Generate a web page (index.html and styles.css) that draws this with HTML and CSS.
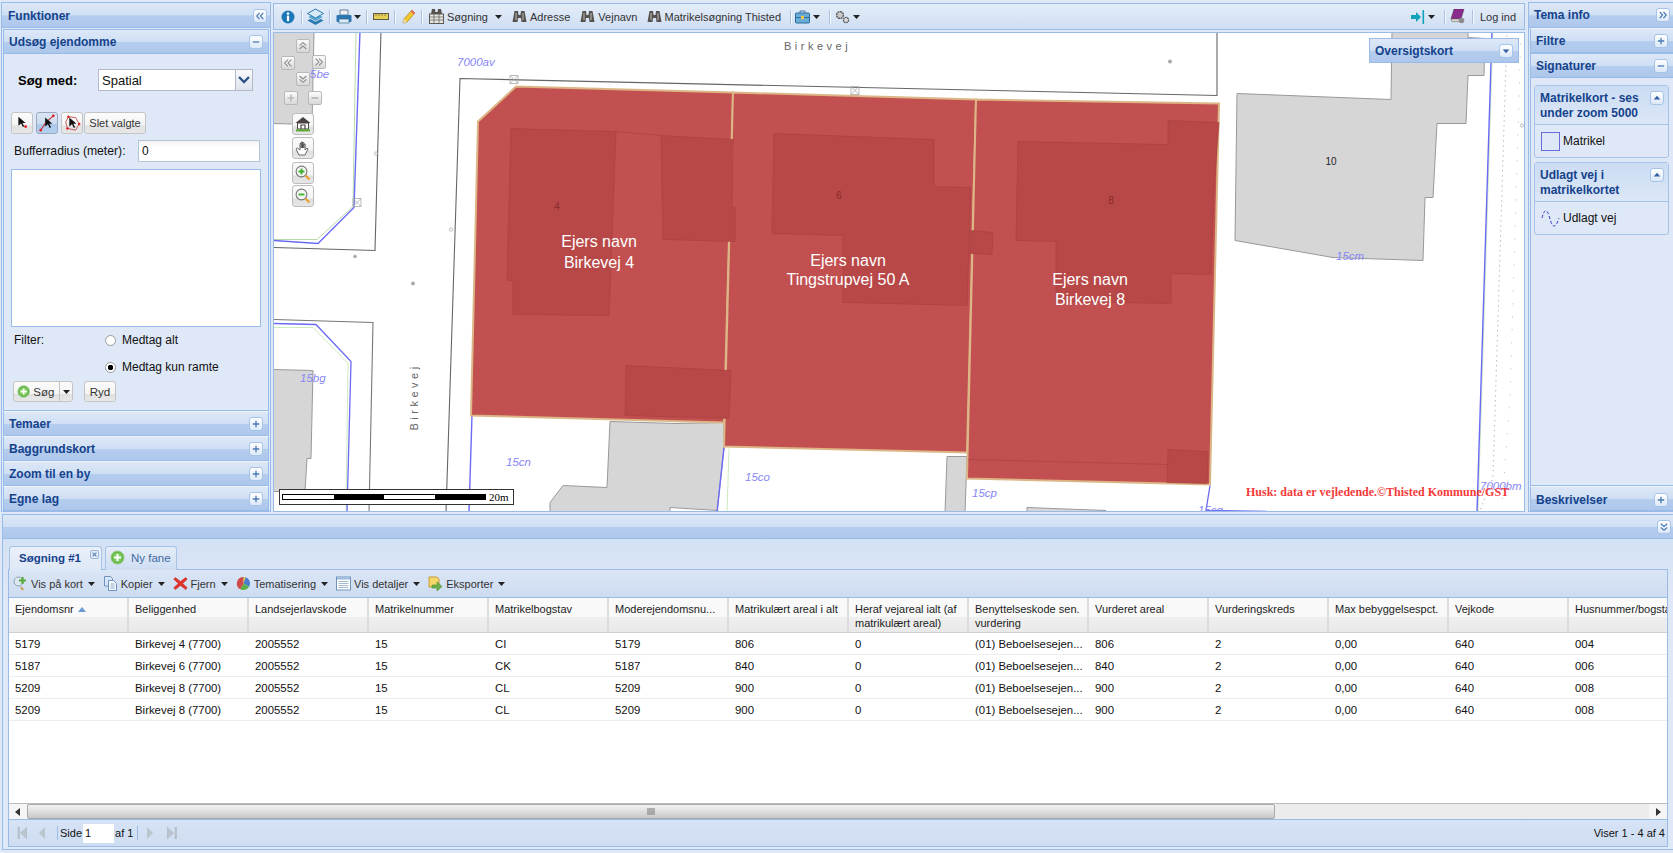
FILE: index.html
```html
<!DOCTYPE html>
<html lang="da">
<head>
<meta charset="utf-8">
<title>Kort</title>
<link rel="stylesheet" href="styles.css">
</head>
<body>
<svg class="defs" aria-hidden="true">
  <symbol id="i-plus" viewBox="0 0 13 13"><path d="M6.5 3v7M3 6.5h7" stroke="#4a7ab5" stroke-width="1.4" fill="none"/></symbol>
  <symbol id="i-minus" viewBox="0 0 13 13"><path d="M3 6.5h7" stroke="#4a7ab5" stroke-width="1.4" fill="none"/></symbol>
  <symbol id="i-dleft" viewBox="0 0 13 13"><path d="M6 3L3 6.5 6 10M10 3L7 6.5 10 10" stroke="#4a7ab5" stroke-width="1.3" fill="none"/></symbol>
  <symbol id="i-dright" viewBox="0 0 13 13"><path d="M3 3l3 3.5L3 10M7 3l3 3.5L7 10" stroke="#4a7ab5" stroke-width="1.3" fill="none"/></symbol>
  <symbol id="i-ddown" viewBox="0 0 13 13"><path d="M3 3l3.5 3L10 3M3 7l3.5 3L10 7" stroke="#4a7ab5" stroke-width="1.3" fill="none"/></symbol>
  <symbol id="i-tdown" viewBox="0 0 13 13"><path d="M3 5h7L6.5 9z" fill="#2f5f9f"/></symbol>
  <symbol id="i-tup" viewBox="0 0 13 13"><path d="M3 8h7L6.5 4z" fill="#2f5f9f"/></symbol>
  <symbol id="i-binoc" viewBox="0 0 15 15"><path d="M2.5 2h3.5l.5 4h2l.5-4h3.5l2 11H9.5L9 9H6l-.5 4H.5z" fill="#55524f"/><path d="M3 4h2v7H3zM10 4h2v7h-2z" fill="#8c8985"/></symbol>
  <symbol id="i-plusgreen" viewBox="0 0 15 15"><circle cx="7.5" cy="7.5" r="6.6" fill="#67b94a" stroke="#9fcf8d"/><circle cx="7.5" cy="7.5" r="4.6" fill="#7fca60"/><path d="M7.5 4v7M4 7.5h7" stroke="#fff" stroke-width="2"/></symbol>
  <symbol id="i-caret" viewBox="0 0 7 4"><path d="M0 0h7L3.5 4z" fill="#222"/></symbol>
</svg>

<div class="top">
  <aside class="left">
    <div class="hd hd-main"><span>Funktioner</span><b class="tool"><svg><use href="#i-dleft"/></svg></b></div>
    <section class="acc acc-open">
      <div class="hd"><span>Udsøg ejendomme</span><b class="tool"><svg><use href="#i-minus"/></svg></b></div>
      <div class="search">
        <div class="row-with">
          <label class="with-label">Søg med:</label>
          <div class="select"><span>Spatial</span><i class="trigger"><svg viewBox="0 0 16 20"><path d="M3 7l5 5 5-5" stroke="#2f5487" stroke-width="2.4" fill="none"/></svg></i></div>
        </div>
        <div class="row-tools">
          <button class="btn btn-icon"><svg viewBox="0 0 20 20"><path d="M6 3v10l3-2.5 2 4 1.5-.8-2-3.8h3.5z" fill="#111"/><circle cx="14" cy="14" r="1.6" fill="#e02020"/></svg></button>
          <button class="btn btn-icon btn-on"><svg viewBox="0 0 20 20"><path d="M3 18L9 9l8-7" stroke="#c03030" stroke-width="1.2" fill="none"/><path d="M8 4v10l3-2.5 2 4 1.5-.8-2-3.8h3.5z" fill="#111"/><circle cx="3" cy="18" r="1.5" fill="#e02020"/><circle cx="17" cy="2" r="1.5" fill="#e02020"/></svg></button>
          <button class="btn btn-icon"><svg viewBox="0 0 20 20"><path d="M6 3l8 1 4 7-4 7-9-2-2-7z" fill="none" stroke="#c05050"/><path d="M7 4v10l3-2.5 2 4 1.5-.8-2-3.8h3.5z" fill="#111"/><circle cx="6" cy="3" r="1.4" fill="#e02020"/><circle cx="18" cy="11" r="1.4" fill="#e02020"/><circle cx="5" cy="16" r="1.4" fill="#e02020"/></svg></button>
          <button class="btn btn-text">Slet valgte</button>
        </div>
        <div class="row-buffer">
          <label>Bufferradius (meter):</label>
          <div class="input">0</div>
        </div>
        <div class="listbox"></div>
        <div class="filter">
          <span class="filter-label">Filter:</span>
          <div class="radios">
            <div class="radio"><i class="dot"></i><span>Medtag alt</span></div>
            <div class="radio"><i class="dot dot-on"></i><span>Medtag kun ramte</span></div>
          </div>
        </div>
        <div class="row-actions">
          <button class="btn btn-search"><svg><use href="#i-plusgreen"/></svg><span>Søg</span><i class="split"><svg><use href="#i-caret"/></svg></i></button>
          <button class="btn btn-clear">Ryd</button>
        </div>
      </div>
    </section>
    <section class="acc"><div class="hd"><span>Temaer</span><b class="tool"><svg><use href="#i-plus"/></svg></b></div></section>
    <section class="acc"><div class="hd"><span>Baggrundskort</span><b class="tool"><svg><use href="#i-plus"/></svg></b></div></section>
    <section class="acc"><div class="hd"><span>Zoom til en by</span><b class="tool"><svg><use href="#i-plus"/></svg></b></div></section>
    <section class="acc"><div class="hd"><span>Egne lag</span><b class="tool"><svg><use href="#i-plus"/></svg></b></div></section>
  </aside>

  <main class="center">
    <div class="mapbar">
      <svg class="ti ti-info" viewBox="0 0 14 14"><circle cx="7" cy="7" r="6.5" fill="#1c79b7"/><circle cx="7" cy="3.6" r="1.3" fill="#fff"/><rect x="5.9" y="5.6" width="2.2" height="5.6" fill="#fff"/></svg>
      <i class="sep"></i>
      <svg class="ti ti-layers" viewBox="0 0 17 17"><path d="M8.5 8l8 4.5-8 4.5-8-4.5z" fill="#2b78b0"/><path d="M8.5 4.5l8 4.5-8 4.5-8-4.5z" fill="#5aa4d0" stroke="#fff" stroke-width=".6"/><path d="M8.5 1l8 4.5-8 4.5-8-4.5z" fill="#d8eaf6" stroke="#2b78b0"/></svg>
      <i class="sep"></i>
      <svg class="ti ti-print" viewBox="0 0 16 15"><path d="M4 1h8v5H4z" fill="#eef3f8" stroke="#67809a"/><rect x="0.5" y="6" width="15" height="7" rx="1" fill="#2b78b0"/><rect x="3" y="10" width="10" height="4" fill="#dce8f2" stroke="#1f5c88" stroke-width=".6"/></svg>
      <svg class="caret"><use href="#i-caret"/></svg>
      <i class="sep"></i>
      <svg class="ti ti-ruler" viewBox="0 0 16 8"><rect x=".5" y=".5" width="15" height="6" fill="#e6cf55" stroke="#5c5a45"/><path d="M3 1v2M6 1v2M9 1v2M12 1v2" stroke="#5c5a45" stroke-width=".7"/></svg>
      <i class="sep"></i>
      <svg class="ti ti-pencil" viewBox="0 0 14 15"><path d="M1 14l1-4 8-9 3 3-8 9z" fill="#f3c92c" stroke="#a08020" stroke-width=".7"/><path d="M1 14l1-4 3 3z" fill="#f4dfb4"/><path d="M10 1l3 3-1.5 1.5-3-3z" fill="#e66d6d"/></svg>
      <i class="sep"></i>
      <svg class="ti ti-table" viewBox="0 0 15 15"><path d="M3 0h3l.4 3h2.2L9 0h3l1 5H2z" fill="#55524f"/><rect x=".5" y="5" width="14" height="9.5" fill="#e8e6e2" stroke="#5c5a55"/><path d="M.5 8h14M.5 11h14M5 5v9M10 5v9" stroke="#5c5a55" stroke-width=".7"/></svg>
      <span class="bt bt-sog">Søgning</span>
      <svg class="caret caret-sog"><use href="#i-caret"/></svg>
      <svg class="ti ti-b1"><use href="#i-binoc"/></svg><span class="bt">Adresse</span>
      <svg class="ti ti-b2"><use href="#i-binoc"/></svg><span class="bt">Vejnavn</span>
      <svg class="ti ti-b3"><use href="#i-binoc"/></svg><span class="bt">Matrikelsøgning Thisted</span>
      <i class="sep sep-a"></i>
      <svg class="ti ti-bag" viewBox="0 0 15 14"><path d="M5 3V1h5v2" fill="none" stroke="#3d7aa8"/><rect x=".5" y="3" width="14" height="10" rx="1" fill="#6aaed8" stroke="#2b6a9a"/><path d="M.5 7.5h14" stroke="#2b6a9a"/><rect x="6" y="6" width="3" height="3" fill="#f2c94c"/></svg>
      <svg class="caret caret-n"><use href="#i-caret"/></svg>
      <i class="sep sep-b"></i>
      <svg class="ti ti-gears" viewBox="0 0 15 14"><circle cx="5" cy="5" r="3.4" fill="#c9c9c9" stroke="#555" stroke-width="1.4" stroke-dasharray="2 .6"/><circle cx="11" cy="10" r="2.6" fill="#dedede" stroke="#555" stroke-width="1.3" stroke-dasharray="1.6 .6"/></svg>
      <svg class="caret caret-n"><use href="#i-caret"/></svg>
      <span class="grow"></span>
      <svg class="ti ti-arrow" viewBox="0 0 14 14"><path d="M0 5h5V2l5 5-5 5V9H0z" fill="#12a3bb"/><rect x="11.5" y="0" width="1.6" height="14" fill="#12a3bb"/></svg>
      <svg class="caret caret-n"><use href="#i-caret"/></svg>
      <i class="sep sep-c"></i>
      <svg class="ti ti-book" viewBox="0 0 15 15"><path d="M4 0h10L11 10H1z" fill="#8a2a8c" stroke="#5c3a5c" stroke-width=".6"/><path d="M1 10h10l.6 2.6H2z" fill="#e4e0d8" stroke="#666" stroke-width=".6"/><circle cx="11.5" cy="11.5" r="2.8" fill="#8d8d8d"/></svg>
      <i class="sep sep-d"></i>
      <span class="bt bt-log">Log ind</span>
    </div>

    <div class="map">
      <svg class="mapsvg" viewBox="274 33 1250 477">
        <!-- grey buildings -->
        <g fill="#d6d6d6" stroke="#999" stroke-width="1">
          <path d="M273 32L314 32 312 124 273 123Z"/>
          <path d="M273 369L313 370 311 458 307 458 305 491 273 491Z"/>
          <path d="M1392 30L1468 30 1468 37 1485 38 1484 75 1468 75 1466 123 1437 123 1433 197 1425 197 1423 260 1333 257 1235 240 1237 93 1391 99Z"/>
          <path d="M610 421L675 423 724 422 724 447 717 512 550 512 550 502 563 485 607 487Z"/>
          <path d="M947 456L967 456 965 512 945 512Z"/>
          <path d="M1027 507L1106 510 1106 514 1027 514Z"/>
          <path d="M670 507L718 510 718 514 670 514Z" fill="#fff"/>
        </g>
        <!-- parcel lines -->
        <g fill="none">
          <path d="M356 30L353 206 317 239 274 239" stroke="#b8dca8"/>
          <path d="M360 30L354 207 318 243 273 240" stroke="#6a6af5" stroke-width="1.4"/>
          <path d="M381 30L375 250 273 247" stroke="#666" stroke-width="1.1"/>
          <path d="M274 327L313 327 348 363 346 512" stroke="#cdebc0"/>
          <path d="M274 323L316 324 351 361 347 512" stroke="#6a6af5" stroke-width="1.3"/>
          <path d="M274 319L373 322 369 512" stroke="#777" stroke-width="1.1"/>
          <path d="M446 512L460 78 1217 95 1217 30" stroke="#666" stroke-width="1.1"/>
          <path d="M472 414L469 512" stroke="#6a6af5" stroke-width="1.4"/>
          <path d="M729 448L727 512" stroke="#cdebc0"/>
          <path d="M724 447L717 512" stroke="#6a6af5" stroke-width="1.4"/>
          <path d="M1493 30L1478 512" stroke="#cdebc0"/>
          <path d="M1492 30L1477 512" stroke="#6a6af5" stroke-width="1.4"/>
          <path d="M1210 485L1206 510 1267 511" stroke="#6a6af5" stroke-width="1.3"/>
          <path d="M1507 30L1493 477 1480 510" stroke="#999" stroke-dasharray="1 4"/>
          <path d="M1521 30L1510 400 1502 503" stroke="#bbb" stroke-dasharray="1 12"/>
        </g>
        <!-- red parcels -->
        <g stroke="#dcb686" stroke-width="2" fill="#c25050">
          <path d="M516 86L733 92 724 422 471 415 478 121Z"/>
          <path d="M733 92L976 99 967 452 724 446Z"/>
          <path d="M976 99L1219 103 1210 484 967 478Z"/>
        </g>
        <g fill="#b84848" stroke="#a83e3e" stroke-width=".6">
          <path d="M511 128L616 131 609 315 513 314 513 280 507 280Z"/>
          <path d="M661 135L733 139 732 207 735 207 735 241 663 239Z"/>
          <path d="M626 365L731 370 729 418 625 415Z"/>
          <path d="M774 133L934 139 934 186 971 187 967 305 843 302 843 235 772 233Z"/>
          <path d="M971 230L993 232 992 254 970 253Z"/>
          <path d="M1018 141L1168 144 1168 120 1219 122 1214 189 1211 274 1171 273 1171 303 1056 301 1056 241 1016 240Z"/>
          <path d="M1168 449L1208 451 1207 483 1167 482Z"/>
        </g>
        <path d="M968 459L1168 464M616 131L661 135" stroke="#a83e3e" stroke-width=".6" fill="none"/>
        <!-- small markers -->
        <g fill="none" stroke="#aaa" stroke-width=".8">
          <path d="M510 75h8v8h-8zM510 75l8 8M518 75l-8 8"/>
          <path d="M851 86h8v8h-8zM851 86l8 8M859 86l-8 8"/>
          <path d="M353 198h8v8h-8zM353 198l8 8M361 198l-8 8"/>
          <circle cx="376" cy="153" r="1.6"/>
          <circle cx="451" cy="229" r="1.6"/>
          <circle cx="1522" cy="125" r="1.6"/>
        </g>
        <g fill="#aaa">
          <circle cx="355" cy="256" r="1.8"/>
          <circle cx="413" cy="283" r="2"/>
          <circle cx="1170" cy="61" r="2"/>
        </g>
        <!-- labels -->
        <g class="lbl">
          <text x="457" y="65">7000av</text>
          <text x="310" y="77">5be</text>
          <text x="300" y="381">15bg</text>
          <text x="506" y="465">15cn</text>
          <text x="745" y="480">15co</text>
          <text x="1336" y="259">15cm</text>
          <text x="972" y="496">15cp</text>
          <text x="1198" y="513">15cq</text>
          <text x="1480" y="489">7000bm</text>
        </g>
        <text class="road" x="784" y="49">Birkevej</text>
        <text class="road" transform="translate(418 430) rotate(-90)">Birkevej</text>
        <g class="own">
          <text x="599" y="246">Ejers navn</text>
          <text x="599" y="267">Birkevej 4</text>
          <text x="848" y="265">Ejers navn</text>
          <text x="848" y="284">Tingstrupvej 50 A</text>
          <text x="1090" y="284">Ejers navn</text>
          <text x="1090" y="304">Birkevej 8</text>
        </g>
        <g class="num">
          <text x="557" y="209">4</text>
          <text x="839" y="198">6</text>
          <text x="1111" y="203">8</text>
          <text class="num-k" x="1331" y="164">10</text>
        </g>
      </svg>

      <b class="nb nb-up"><svg viewBox="0 0 14 14"><path d="M3 6.5L7 3l4 3.5M3 10.5L7 7l4 3.5" fill="none" stroke="#8a8a8a" stroke-width="1.2"/></svg></b>
      <b class="nb nb-left"><svg viewBox="0 0 14 14"><path d="M7 3L3 7l4 4M11 3L7 7l4 4" fill="none" stroke="#8a8a8a" stroke-width="1.2"/></svg></b>
      <b class="nb nb-right"><svg viewBox="0 0 14 14"><path d="M3 3l4 4-4 4M7 3l4 4-4 4" fill="none" stroke="#8a8a8a" stroke-width="1.2"/></svg></b>
      <b class="nb nb-down"><svg viewBox="0 0 14 14"><path d="M3 3.5L7 7l4-3.5M3 7.5l4 3.5 4-3.5" fill="none" stroke="#8a8a8a" stroke-width="1.2"/></svg></b>
      <b class="nb nb-plus"><svg viewBox="0 0 14 14"><path d="M7 3v8M3 7h8" stroke="#aaa" stroke-width="1.4"/></svg></b>
      <b class="nb nb-minus"><svg viewBox="0 0 14 14"><path d="M3 7h8" stroke="#aaa" stroke-width="1.6"/></svg></b>
      <b class="mb mb-home"><svg viewBox="0 0 16 16"><path d="M8 1L.5 7h15z" fill="#4a4340"/><path d="M2.5 7h11v6h-11z" fill="#fff" stroke="#4a4340"/><path d="M6 13V9h4v4" fill="none" stroke="#4a4340" stroke-width="1.2"/><rect x="1" y="13.4" width="14" height="2" fill="#5aa82e"/></svg></b>
      <b class="mb mb-hand"><svg viewBox="0 0 16 16"><path d="M4 15L1 9l1.5-1L5 10V3.5h1.2V8 2h1.3v6V2.5h1.3V8 4h1.3v6l1.8-2 1.2.8L10 15z" fill="#fff" stroke="#444" stroke-width=".8"/></svg></b>
      <b class="mb mb-zin"><svg viewBox="0 0 16 16"><circle cx="6.5" cy="6.5" r="5.4" fill="#f4f7f4" stroke="#777" stroke-width="1.1"/><path d="M6.5 3.5v6M3.5 6.5h6" stroke="#3fae2f" stroke-width="1.8"/><path d="M10.5 10.5l4 4" stroke="#eda02e" stroke-width="2.2"/></svg></b>
      <b class="mb mb-zout"><svg viewBox="0 0 16 16"><circle cx="6.5" cy="6.5" r="5.4" fill="#f4f7f4" stroke="#777" stroke-width="1.1"/><path d="M3.5 6.5h6" stroke="#3fae2f" stroke-width="1.8"/><path d="M10.5 10.5l4 4" stroke="#eda02e" stroke-width="2.2"/></svg></b>

      <div class="overview hd"><span>Oversigtskort</span><b class="tool"><svg><use href="#i-tdown"/></svg></b></div>

      <div class="scalebar">
        <div class="scale-track"><i class="sc-w"></i><i class="sc-b"></i><i class="sc-w"></i><i class="sc-b"></i></div>
        <span>20m</span>
      </div>
      <div class="notice">Husk: data er vejledende.©Thisted Kommune/GST</div>
    </div>
  </main>

  <aside class="right">
    <div class="hd hd-main"><span>Tema info</span><b class="tool"><svg><use href="#i-dright"/></svg></b></div>
    <section class="acc"><div class="hd"><span>Filtre</span><b class="tool"><svg><use href="#i-plus"/></svg></b></div></section>
    <section class="acc acc-open acc-sig">
      <div class="hd"><span>Signaturer</span><b class="tool"><svg><use href="#i-minus"/></svg></b></div>
      <div class="legend">
        <div class="lg">
          <div class="lg-hd"><span>Matrikelkort - ses under zoom 5000</span><b class="tool"><svg><use href="#i-tup"/></svg></b></div>
          <div class="lg-row"><i class="swatch"></i><span>Matrikel</span></div>
        </div>
        <div class="lg">
          <div class="lg-hd"><span>Udlagt vej i matrikelkortet</span><b class="tool"><svg><use href="#i-tup"/></svg></b></div>
          <div class="lg-row"><svg class="wave" viewBox="0 0 19 18"><path d="M1 9C3 1 5 0 7 4s3 13 6 13 4-6 5-8" fill="none" stroke="#3a3ad0" stroke-width="1" stroke-dasharray="3 2"/></svg><span>Udlagt vej</span></div>
        </div>
      </div>
    </section>
    <section class="acc acc-last"><div class="hd"><span>Beskrivelser</span><b class="tool"><svg><use href="#i-plus"/></svg></b></div></section>
  </aside>
</div>

<section class="bottom">
  <div class="hd hd-bottom"><span></span><b class="tool"><svg><use href="#i-ddown"/></svg></b></div>
  <div class="bottom-body">
    <div class="tabs">
      <div class="tab tab-on"><span>Søgning #1</span><i class="tab-x"><svg viewBox="0 0 9 9"><path d="M2 2l5 5M7 2L2 7" stroke="#5a7fb0" stroke-width="1.5"/></svg></i></div>
      <div class="tab tab-new"><svg><use href="#i-plusgreen"/></svg><span>Ny fane</span></div>
    </div>
    <div class="gridpanel">
      <div class="gridbar">
        <svg class="gi" viewBox="0 0 15 15"><circle cx="5.5" cy="5.5" r="4.5" fill="#dce8f0" stroke="#8aa0b0"/><path d="M8 11l2 3" stroke="#c99a50" stroke-width="2"/><path d="M9.5 1v7M6 4.5h7" stroke="#58a83c" stroke-width="2.2"/></svg>
        <span class="gt">Vis på kort</span><svg class="caret"><use href="#i-caret"/></svg>
        <svg class="gi gi-k" viewBox="0 0 14 15"><path d="M1 .5h6l2 2V10H1z" fill="#d6e6f8" stroke="#6f93bd"/><path d="M5 4.5h5l3 3v7H5z" fill="#f2f7fd" stroke="#6f93bd"/><path d="M7 8h4M7 10h4M7 12h4" stroke="#6f93bd" stroke-width=".7"/></svg>
        <span class="gt">Kopier</span><svg class="caret"><use href="#i-caret"/></svg>
        <svg class="gi gi-f" viewBox="0 0 14 14"><path d="M2.2 1.5L7 5.2l4.8-3.7 1.5 1.5L9 7l4.3 4-1.5 1.7L7 8.8l-4.8 3.9L.7 11 5 7 .7 3z" fill="#e6322b" stroke="#b52a25" stroke-width=".5"/></svg>
        <span class="gt">Fjern</span><svg class="caret"><use href="#i-caret"/></svg>
        <svg class="gi gi-t" viewBox="0 0 16 15"><path d="M8 7.5V.5a7 7 0 0 1 6 10.5z" fill="#4a7fd0"/><path d="M8 7.5L14 11a7 7 0 0 1-9.5 2.6z" fill="#5daf46"/><path d="M8 7.5l-3.5 6.1A7 7 0 0 1 8 .5z" fill="#d04a4a"/><path d="M8 .5a7 7 0 0 1 2.4.4L8 7.5z" fill="#e9c944"/></svg>
        <span class="gt">Tematisering</span><svg class="caret"><use href="#i-caret"/></svg>
        <svg class="gi gi-d" viewBox="0 0 15 14"><rect x=".5" y=".5" width="14" height="13" fill="#fff" stroke="#6f93bd"/><rect x="1" y="1" width="13" height="2" fill="#9ab9dc"/><path d="M2.5 5h10M2.5 7h10M2.5 9h10M2.5 11h10" stroke="#8fa8c6" stroke-width=".8"/></svg>
        <span class="gt">Vis detaljer</span><svg class="caret"><use href="#i-caret"/></svg>
        <svg class="gi gi-e" viewBox="0 0 15 15"><path d="M1 1h8l2 2v8H1z" fill="#f6d86a" stroke="#c49a3c"/><path d="M4 9h5V6l5 4.5-5 4.5v-3H4z" fill="#6bb04a" stroke="#4a8a30" stroke-width=".6"/></svg>
        <span class="gt">Eksporter</span><svg class="caret"><use href="#i-caret"/></svg>
      </div>
      <div class="gridhead">
        <div class="hc">Ejendomsnr <svg class="sort" viewBox="0 0 8 5"><path d="M0 5h8L4 0z" fill="#6a9ad6"/></svg></div>
        <div class="hc">Beliggenhed</div>
        <div class="hc">Landsejerlavskode</div>
        <div class="hc">Matrikelnummer</div>
        <div class="hc">Matrikelbogstav</div>
        <div class="hc">Moderejendomsnu...</div>
        <div class="hc">Matrikulært areal i alt</div>
        <div class="hc">Heraf vejareal ialt (af matrikulært areal)</div>
        <div class="hc">Benyttelseskode sen. vurdering</div>
        <div class="hc">Vurderet areal</div>
        <div class="hc">Vurderingskreds</div>
        <div class="hc">Max bebyggelsespct.</div>
        <div class="hc">Vejkode</div>
        <div class="hc">Husnummer/bogstav</div>
      </div>
      <div class="rows">
        <div class="gr"><span>5179</span><span>Birkevej 4 (7700)</span><span>2005552</span><span>15</span><span>CI</span><span>5179</span><span>806</span><span>0</span><span>(01) Beboelsesejen...</span><span>806</span><span>2</span><span>0,00</span><span>640</span><span>004</span></div>
        <div class="gr"><span>5187</span><span>Birkevej 6 (7700)</span><span>2005552</span><span>15</span><span>CK</span><span>5187</span><span>840</span><span>0</span><span>(01) Beboelsesejen...</span><span>840</span><span>2</span><span>0,00</span><span>640</span><span>006</span></div>
        <div class="gr"><span>5209</span><span>Birkevej 8 (7700)</span><span>2005552</span><span>15</span><span>CL</span><span>5209</span><span>900</span><span>0</span><span>(01) Beboelsesejen...</span><span>900</span><span>2</span><span>0,00</span><span>640</span><span>008</span></div>
        <div class="gr"><span>5209</span><span>Birkevej 8 (7700)</span><span>2005552</span><span>15</span><span>CL</span><span>5209</span><span>900</span><span>0</span><span>(01) Beboelsesejen...</span><span>900</span><span>2</span><span>0,00</span><span>640</span><span>008</span></div>
      </div>
      <div class="hscroll">
        <i class="sb-arrow"><svg viewBox="0 0 8 8"><path d="M6 0v8L1 4z" fill="#333"/></svg></i>
        <div class="sb-thumb"><svg class="sb-grip" viewBox="0 0 9 7"><path d="M1 0v7M3 0v7M5 0v7M7 0v7" stroke="#777"/></svg></div>
        <div class="sb-rest"></div>
        <i class="sb-arrow"><svg viewBox="0 0 8 8"><path d="M2 0v8l5-4z" fill="#333"/></svg></i>
      </div>
      <div class="pager">
        <svg class="pg pg-first" viewBox="0 0 10 12"><path d="M1 0v12h1.5V0zM10 0v12L3.5 6z" fill="#b9c3cc" stroke="#a3aeb9" stroke-width=".4"/></svg>
        <svg class="pg pg-prev" viewBox="0 0 6 12"><path d="M6 0v12L0 6z" fill="#b9c3cc"/></svg>
        <i class="psep"></i>
        <span class="pt">Side</span><span class="pinput">1</span><span class="pt">af 1</span>
        <i class="psep psep-r"></i>
        <svg class="pg pg-next" viewBox="0 0 6 12"><path d="M0 0v12l6-6z" fill="#b9c3cc"/></svg>
        <svg class="pg pg-last" viewBox="0 0 10 12"><path d="M0 0v12l6.5-6zM8 0v12h1.5V0z" fill="#b9c3cc" stroke="#a3aeb9" stroke-width=".4"/></svg>
        <span class="grow"></span>
        <span class="pt pt-total">Viser 1 - 4 af 4</span>
      </div>
    </div>
  </div>
</section>
</body>
</html>
```

FILE: styles.css
```css
* { box-sizing: border-box; }
html, body { margin: 0; padding: 0; height: 853px; overflow: hidden; }
body { background: #dfe8f6; font: 12px "Liberation Sans", Arial, sans-serif; color: #111; }
.defs { position: absolute; width: 0; height: 0; overflow: hidden; }
svg { display: block; }
i, b { display: block; font-style: normal; }
button { font: inherit; padding: 0; margin: 0; }

.top { display: flex; padding: 2px 0 0 1px; height: 514px; }
.left { width: 270px; height: 510px; border: 1px solid #99bbe8; display: flex; flex-direction: column; background: #dfe8f6; }
.center { width: 1252px; margin: 1px 0 0 2px; height: 509px; display: flex; flex-direction: column; }
.right { width: 146px; margin-left: 3px; height: 510px; border-left: 1px solid #99bbe8; border-top: 1px solid #99bbe8; border-bottom: 1px solid #99bbe8; display: flex; flex-direction: column; background: #dfe8f6; }

.hd {
  height: 24px; flex: none; display: flex; align-items: center; justify-content: space-between;
  padding: 0 5px 0 5px;
  background: linear-gradient(#dde8f7 0, #cfdff4 50%, #b5cdee 53%, #adc7ec 100%);
  color: #15428b; font-weight: bold; font-size: 12px;
}
.hd-main { height: 25px; border-bottom: 1px solid #99bbe8; padding: 2px 3px 0 6px; }
.tool { width: 14px; height: 14px; background: linear-gradient(#fff, #dce8f7); border: 1px solid #a6c3e8; border-radius: 3px; flex: none; }
.tool svg { width: 12px; height: 12px; }

.acc { flex: none; height: 25px; border: 1px solid #99bbe8; border-top-color: #eef3fb; margin: 0 1px; }
.acc .hd { height: 23px; }
.acc-open { flex: 1; display: flex; flex-direction: column; margin-top: 1px; border-top-color: #99bbe8; }
.acc-open .hd { border-bottom: 1px solid #99bbe8; height: 24px; }

.search { flex: 1; display: flex; flex-direction: column; padding: 15px 8px 0 7px; background: #dfe8f6; }
.row-with { display: flex; align-items: center; height: 22px; padding-left: 7px; }
.with-label { width: 80px; font-size: 13px; font-weight: bold; color: #000; }
.select { width: 155px; height: 22px; display: flex; background: #fff; border: 1px solid #b5b8c8; font-size: 13px; align-items: center; padding-left: 3px; justify-content: space-between; }
.trigger { width: 17px; height: 20px; background: linear-gradient(#fafafa, #dde4ee); border-left: 1px solid #b5b8c8; }
.trigger svg { width: 16px; height: 20px; }
.row-tools { display: flex; margin-top: 21px; gap: 3px; height: 22px; }
.btn { border: 1px solid #c4c4c4; border-radius: 3px; background: linear-gradient(#fbfbfb 0, #f4f4f4 62%, #e0e0e0 63%, #e8e8e8 100%); color: #333; }
.btn-icon { width: 22px; height: 22px; display: flex; align-items: center; justify-content: center; }
.btn-icon svg { width: 18px; height: 18px; }
.btn-on { background: linear-gradient(#dbe6f4 0, #cbdbee 55%, #a9c9ec 56%, #b4d0ee 100%); border-color: #99a8bd; }
.btn-text { margin-left: -2px; width: 62px; height: 22px; font-size: 11px; }
.row-buffer { display: flex; align-items: center; margin-top: 6px; height: 22px; padding-left: 3px; justify-content: space-between; font-size: 12.2px; }
.input { width: 122px; height: 22px; background: linear-gradient(#f2f2f2, #fff 30%); border: 1px solid #b5c3d6; padding: 3px 3px 0 3px; font-size: 12px; }
.listbox { width: 250px; height: 158px; margin-top: 7px; background: #fff; border: 1px solid #99bbe8; flex: none; }
.filter { display: flex; margin-top: 3px; padding-left: 3px; }
.filter-label { width: 91px; line-height: 20px; }
.radios { display: flex; flex-direction: column; gap: 7px; }
.radio { display: flex; align-items: center; height: 20px; gap: 6px; }
.dot { width: 11px; height: 11px; border-radius: 50%; background: #fff; border: 1px solid #9a9a9a; }
.dot-on { background: radial-gradient(#000 0, #000 2.5px, #fff 3px); }
.row-actions { display: flex; margin-top: 4px; margin-left: 2px; gap: 11px; }
.btn-search { width: 60px; height: 21px; display: flex; align-items: center; padding-left: 3px; font-size: 11.5px; }
.btn-search > svg { width: 15px; height: 15px; margin-right: 3px; }
.split { width: 14px; margin-left: 5px; height: 19px; border-left: 1px solid #c4c4c4; display: flex; align-items: center; justify-content: center; }
.split svg { width: 7px; height: 4px; }
.btn-clear { width: 32px; height: 21px; font-size: 11.5px; }

.mapbar { height: 27px; flex: none; display: flex; align-items: center; padding-left: 7px; background: linear-gradient(#e4edf9, #d0def2); border: 1px solid #99bbe8; }
.sep { width: 1px; height: 14px; background: #a9c2e4; box-shadow: 1px 0 0 #f4f8fd; flex: none; margin: 0 5px; }
.ti { flex: none; }
.ti-info { width: 14px; height: 14px; margin-right: 1px; }
.ti-layers { width: 17px; height: 17px; }
.ti-print { width: 16px; height: 15px; margin-left: 1px; }
.caret { width: 7px; height: 4px; flex: none; margin-left: 2px; }
.ti-ruler { width: 16px; height: 8px; margin-left: 1px; }
.ti-pencil { width: 14px; height: 15px; margin-left: 2px; }
.ti-table { width: 15px; height: 15px; margin-left: 2px; }
.bt { font-size: 11px; color: #333; white-space: nowrap; margin-left: 3px; }
.caret-sog { margin-left: 7px; margin-right: 10px; }
.ti-b1, .ti-b2, .ti-b3 { width: 15px; height: 15px; }
.ti-b2 { margin-left: 10px; }
.ti-b3 { margin-left: 9px; }
.sep-a { margin: 0 4px 0 9px; }
.ti-bag { width: 15px; height: 14px; }
.caret-n { margin-left: 3px; }
.sep-b { margin: 0 5px 0 9px; }
.ti-gears { width: 15px; height: 14px; }
.grow { flex: 1; }
.ti-arrow { width: 14px; height: 14px; }
.sep-c { margin: 0 5px 0 9px; }
.ti-book { width: 15px; height: 15px; }
.sep-d { margin: 0 5px 0 7px; }
.bt-log { margin: 0 8px 0 2px; }

.map { position: relative; flex: none; width: 1252px; height: 480px; margin-top: 2px; background: #fff; border: 1px solid #99bbe8; overflow: hidden; }
.mapsvg { width: 1250px; height: 478px; }
.lbl text { fill: #8787f5; font: italic 11.5px "Liberation Sans", Arial, sans-serif; }
.road { fill: #666; font: 11px "Liberation Sans", Arial, sans-serif; letter-spacing: 3.5px; }
.own text { fill: #fff; font: 16px "Liberation Sans", Arial, sans-serif; text-anchor: middle; }
.num text { fill: #8a2a2a; font: 10px "Liberation Sans", Arial, sans-serif; text-anchor: middle; }
.num .num-k { fill: #222; }

.nb { position: absolute; width: 14px; height: 14px; border: 1px solid #b8b8b8; border-radius: 2px; background: linear-gradient(#fbfbfb, #d8d8d8); }
.nb svg { width: 12px; height: 12px; }
.nb-up { left: 22px; top: 6px; }
.nb-left { left: 7px; top: 23px; }
.nb-right { left: 38px; top: 22px; }
.nb-down { left: 22px; top: 39px; }
.nb-plus { left: 10px; top: 58px; }
.nb-minus { left: 34px; top: 58px; }
.mb { position: absolute; left: 18px; width: 22px; height: 22px; border: 1px solid #bcbcbc; border-radius: 3px; background: linear-gradient(#fbfbfb 0, #f4f4f4 62%, #dfdfdf 63%, #e6e6e6 100%); padding: 2px; }
.mb svg { width: 16px; height: 16px; }
.mb-home { top: 80px; }
.mb-hand { top: 104px; }
.mb-zin { top: 129px; }
.mb-zout { top: 152px; }

.overview { position: absolute; left: 1095px; top: 5px; width: 150px; height: 25px; border: 1px solid #99bbe8; padding-right: 5px; }
.scalebar { position: absolute; left: 5px; top: 456px; width: 235px; height: 16px; background: #fff; border: 1px solid #333; display: flex; align-items: center; padding-left: 2px; font: 11px "Liberation Serif", serif; color: #000; }
.scale-track { display: flex; width: 204px; height: 6px; border: 1px solid #000; margin-right: 3px; flex: none; }
.sc-w { flex: 1; background: #fff; }
.sc-b { flex: 1; background: #000; }
.notice { position: absolute; left: 972px; top: 452px; color: #f53a3a; font: bold 12px "Liberation Serif", serif; white-space: nowrap; }

.right .acc { margin: 0 0 0 1px; border-right: 0; }
.right .hd-main { padding: 0 3px 0 5px; height: 25px; }
.acc-last .hd { padding-top: 3px; }
.legend { flex: 1; padding: 7px 4px 0 3px; display: flex; flex-direction: column; gap: 4px; }
.lg { border: 1px solid #a6c3e8; border-radius: 3px; }
.lg-hd { display: flex; justify-content: space-between; padding: 5px 4px 0 5px; height: 39px; line-height: 15px; color: #15428b; font-weight: bold; background: linear-gradient(#cbdcf3, #dce7f7); border-bottom: 1px solid #a6c3e8; }
.lg-hd span { width: 106px; }
.lg-row { height: 32px; display: flex; align-items: center; padding-left: 6px; gap: 3px; color: #111; }
.swatch { width: 19px; height: 19px; border: 1px solid #6a6ad8; }
.wave { width: 19px; height: 18px; }

.bottom { margin-left: 2px; height: 336px; border: 1px solid #99bbe8; border-right: 0; display: flex; flex-direction: column; }
.hd-bottom { height: 24px; border-bottom: 1px solid #99bbe8; padding-right: 2px; }
.bottom-body { flex: 1; padding: 7px 5px 0 5px; background: linear-gradient(#d3e1f4, #dfe8f6 60px); display: flex; flex-direction: column; }
.tabs { display: flex; gap: 3px; height: 24px; padding-left: 1px; position: relative; z-index: 1; }
.tab { height: 24px; border: 1px solid #a6c3e8; border-bottom: 0; border-radius: 3px 3px 0 0; display: flex; align-items: center; color: #416aa3; font-size: 11.5px; background: linear-gradient(#e4ecf8, #cfdef3); padding-bottom: 2px; }
.tab-on { width: 93px; padding-left: 9px; font-weight: bold; color: #15428b; background: linear-gradient(#e9f0fa, #dfe8f6); justify-content: space-between; padding-right: 2px; }
.tab-x { width: 9px; height: 9px; background: #e4edf8; border: 1px solid #9ab5d8; border-radius: 2px; margin-bottom: 6px; }
.tab-x svg { width: 7px; height: 7px; }
.tab-new { width: 72px; padding-left: 4px; gap: 6px; }
.tab-new svg { width: 15px; height: 15px; }
.gridpanel { margin-top: -1px; flex: 1; border: 1px solid #99bbe8; margin-bottom: 2px; display: flex; flex-direction: column; background: #fff; overflow: hidden; }
.gridbar { height: 28px; flex: none; display: flex; align-items: center; padding-left: 4px; background: linear-gradient(#dbe6f6, #cddcf1); border-bottom: 1px solid #99bbe8; }
.gi { width: 15px; height: 15px; flex: none; }
.gt { font-size: 11px; color: #333; margin-left: 3px; white-space: nowrap; }
.gridbar .caret { margin-left: 5px; margin-right: 8px; }
.gridhead, .gr { display: grid; grid-template-columns: repeat(14, 120px); }
.gridhead { height: 35px; flex: none; border-bottom: 1px solid #cfcfcf; background: linear-gradient(#f9f9f9 0, #f9f9f9 55%, #efefef 57%, #e9e9e9 100%); }
.hc { border-right: 2px solid #dcdcdc; padding: 4px 4px 0 6px; font-size: 11px; line-height: 14px; color: #222; white-space: normal; }
.hc:last-child { white-space: nowrap; overflow: hidden; }
.sort { display: inline-block; width: 8px; height: 5px; margin: 0 0 1px 1px; }
.rows { flex: 1; }
.gr { height: 22px; border-bottom: 1px solid #ededed; align-items: center; }
.gr span { padding-left: 6px; font-size: 11.4px; white-space: nowrap; overflow: hidden; color: #111; }
.hscroll { height: 16px; flex: none; display: flex; background: #ececec; border-top: 1px solid #bdbdbd; }
.sb-arrow { width: 18px; background: #f5f5f5; display: flex; align-items: center; justify-content: center; flex: none; }
.sb-arrow svg { width: 8px; height: 8px; }
.sb-thumb { width: 1248px; background: linear-gradient(#f3f3f3, #c8c8c8); border: 1px solid #a9a9a9; border-radius: 2px; flex: none; display: flex; align-items: center; justify-content: center; }
.sb-grip { width: 9px; height: 7px; }
.sb-rest { flex: 1; background: #ececec; }
.pager { height: 27px; flex: none; display: flex; align-items: center; padding-left: 8px; background: linear-gradient(#d6e3f5, #cfddf2); border-top: 1px solid #99bbe8; font-size: 11px; }
.pg { flex: none; height: 12px; opacity: .95; }
.pg-first, .pg-last { width: 10px; }
.pg-prev, .pg-next { width: 6px; }
.pg-prev { margin-left: 12px; }
.pg-last { margin-left: 14px; }
.psep { width: 1px; height: 14px; background: #9dbbe6; margin: 0 2px 0 12px; }
.psep-r { margin: 0 9px 0 4px; }
.pt { color: #111; white-space: nowrap; }
.pinput { width: 31px; height: 19px; margin: 0 1px; background: #fff; padding: 3px 0 0 2px; }
.pt-total { margin-right: 2px; }
```
